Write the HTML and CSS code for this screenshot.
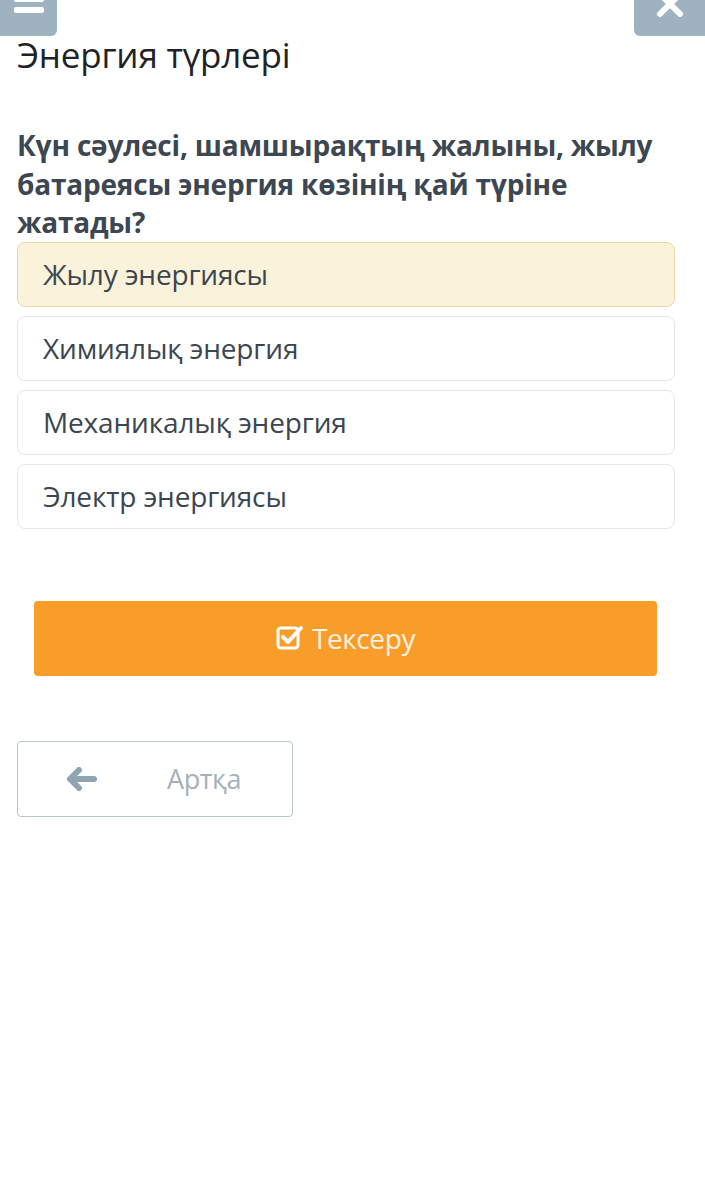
FILE: index.html
```html
<!DOCTYPE html>
<html lang="kk">
<head>
<meta charset="utf-8">
<link rel="stylesheet" href="styles.css">
</head>
<body>
<div class="page">
  <div class="topbar">
    <div class="tbtn menu">
      <svg width="34" height="24" viewBox="0 0 34 24"><rect x="2" y="-4" width="30" height="6" rx="2" fill="#fff"/><rect x="2" y="7" width="30" height="6" rx="2" fill="#fff"/></svg>
    </div>
    <div class="tbtn close">
      <svg width="32" height="24" viewBox="0 0 32 24"><path d="M6 -6 L26 14 M26 -6 L6 14" stroke="#fff" stroke-width="6" stroke-linecap="round"/></svg>
    </div>
  </div>
  <h1 class="title">Энергия түрлері</h1>
  <p class="question">Күн сәулесі, шамшырақтың жалыны, жылу батареясы энергия көзінің қай түріне жатады?</p>
  <div class="options">
    <div class="option selected">Жылу энергиясы</div>
    <div class="option">Химиялық энергия</div>
    <div class="option">Механикалық энергия</div>
    <div class="option">Электр энергиясы</div>
  </div>
  <div class="check-wrap">
    <button class="check">
      <svg width="28" height="26" viewBox="0 0 28 26"><rect x="2" y="3" width="20" height="20" rx="3" fill="none" stroke="#fff" stroke-width="3"/><path d="M7 12 L12 17 L25 3" fill="none" stroke="#fff" stroke-width="4" stroke-linecap="round" stroke-linejoin="round"/></svg>
      <span>Тексеру</span>
    </button>
  </div>
  <button class="back">
    <svg width="30" height="24" viewBox="0 0 30 24"><path d="M12 3 L3 12 L12 21 M4 12 L27 12" fill="none" stroke="#8ea4b3" stroke-width="6" stroke-linecap="round" stroke-linejoin="round"/></svg>
    <span>Артқа</span>
  </button>
</div>
</body>
</html>
```
FILE: styles.css
```css
* { box-sizing: border-box; }
html, body { margin: 0; padding: 0; background: #fff; }
body { font-family: "Open Sans", "Noto Sans", sans-serif; color: #3b4650; }
.page { width: 705px; padding: 0 30px 0 17px; }
.topbar { display: flex; justify-content: space-between; margin: 0 -30px 0 -17px; height: 36px; }
.tbtn { background: #9eb2c0; height: 36px; display: flex; align-items: flex-start; justify-content: center; }
.tbtn.menu { width: 57px; border-radius: 0 0 6px 0; }
.tbtn.close { width: 71px; border-radius: 0 0 0 6px; }
.title { margin: 0; font-weight: 400; font-size: 35px; line-height: 38px; color: #1f2327; letter-spacing: -0.2px; }
.question { margin: 52px 0 0 0; font-size: 28px; line-height: 38.5px; font-weight: 700; color: #3d4751; letter-spacing: -0.2px; }
.options { display: flex; flex-direction: column; gap: 9px; margin-top: 0; }
.option { height: 65px; border: 1px solid #e2e7ec; border-radius: 8px; padding: 0 0 0 25px; display: flex; align-items: center; font-size: 28px; color: #3b4650; letter-spacing: -0.15px; background: #fff; }
.option.selected { background: #fbf2dc; border-color: #e8d8a6; }
.check-wrap { padding: 72px 18px 0 17px; }
.check { width: 100%; height: 75px; background: #f99d2a; border: none; border-radius: 4px; display: flex; align-items: center; justify-content: center; gap: 8px; font-family: "Open Sans", sans-serif; font-size: 28px; color: #fdf1e0; letter-spacing: -0.4px; }
.back { margin-top: 65px; width: 276px; height: 76px; background: #fff; border: 1px solid #b9c5cd; border-radius: 4px; display: flex; align-items: center; padding: 0 0 0 49px; gap: 70px; font-family: "Open Sans", sans-serif; font-size: 27px; color: #a6b1b9; letter-spacing: -0.4px; }
```
